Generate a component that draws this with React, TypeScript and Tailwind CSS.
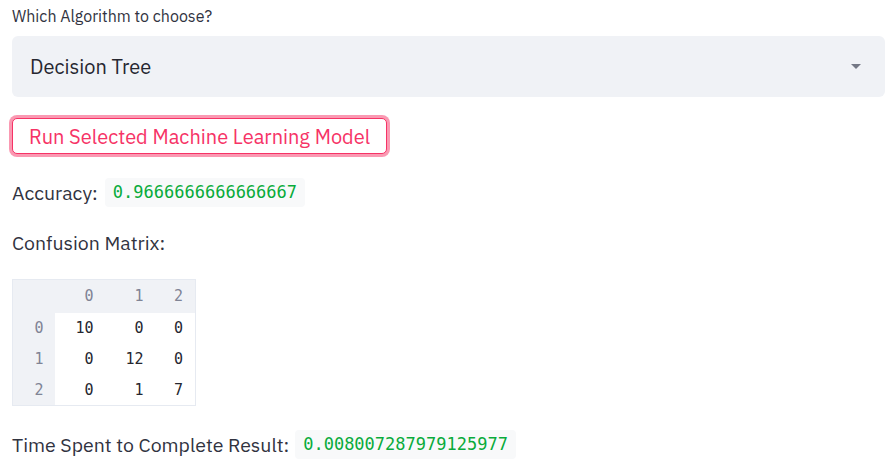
import React from "react";

const matrix = [
  [10, 0, 0],
  [0, 12, 0],
  [0, 1, 7],
];

const sans = "font-['IBM_Plex_Sans','Noto_Sans',sans-serif]";
const mono = "font-['DejaVu_Sans_Mono',monospace]";

export default function App() {
  return (
    <div className={`${sans} bg-white text-[#31333f] px-[12px] pt-[6px] w-[895px] h-[470px]`}>
      {/* Select */}
      <div className="text-[16px] leading-[20px]">Which Algorithm to choose?</div>
      <div className="mt-[10px] h-[61px] w-[873px] bg-[#f0f2f6] rounded-[6px] flex items-center justify-between pl-[18px] pr-[24px]">
        <span className="text-[20px] text-[#262730]">Decision Tree</span>
        <svg width="10" height="5" viewBox="0 0 10 5">
          <path d="M0 0 L10 0 L5 5 Z" fill="#747885" />
        </svg>
      </div>

      {/* Run button */}
      <button className="mt-[21px] h-[36px] w-[375px] rounded-[5px] border border-[#f63366] ring-[3px] ring-[#f63366]/50 bg-white text-[#f63366] text-[20px] flex items-center justify-center pt-[1px]">
        Run Selected Machine Learning Model
      </button>

      {/* Accuracy */}
      <div className="mt-[24px] flex items-center gap-[7px] text-[19.5px]">
        <span>Accuracy:</span>
        <code className={`${mono} h-[29px] flex items-center px-[8px] rounded-[4px] bg-[#f8f9fa] text-[#09ab3b] text-[17px]`}>
          0.9666666666666667
        </code>
      </div>

      {/* Confusion matrix */}
      <div className="mt-[22px] text-[19.5px] leading-[28px]">Confusion Matrix:</div>
      <table className={`${mono} mt-[22px] border border-[#e6eaf1] border-collapse text-[15px]`}>
        <thead>
          <tr className="h-[33px] bg-[#f0f2f6] text-[#808495]">
            <th className="w-[42px] font-normal" />
            <th className="w-[51px] pr-[12px] text-right font-normal">0</th>
            <th className="w-[50px] pr-[12px] text-right font-normal">1</th>
            <th className="w-[40px] pr-[12px] text-right font-normal">2</th>
          </tr>
        </thead>
        <tbody>
          {matrix.map((row, i) => (
            <tr key={i} className="h-[31px]">
              <td className="bg-[#f0f2f6] text-[#808495] pr-[11px] text-right">{i}</td>
              {row.map((v, j) => (
                <td key={j} className="pr-[12px] text-right text-[#262730]">
                  {v}
                </td>
              ))}
            </tr>
          ))}
        </tbody>
      </table>

      {/* Time */}
      <div className="mt-[24px] flex items-center gap-[6px] text-[19.5px]">
        <span>Time Spent to Complete Result:</span>
        <code className={`${mono} h-[29px] flex items-center px-[8px] rounded-[4px] bg-[#f8f9fa] text-[#09ab3b] text-[17px]`}>
          0.008007287979125977
        </code>
      </div>
    </div>
  );
}
